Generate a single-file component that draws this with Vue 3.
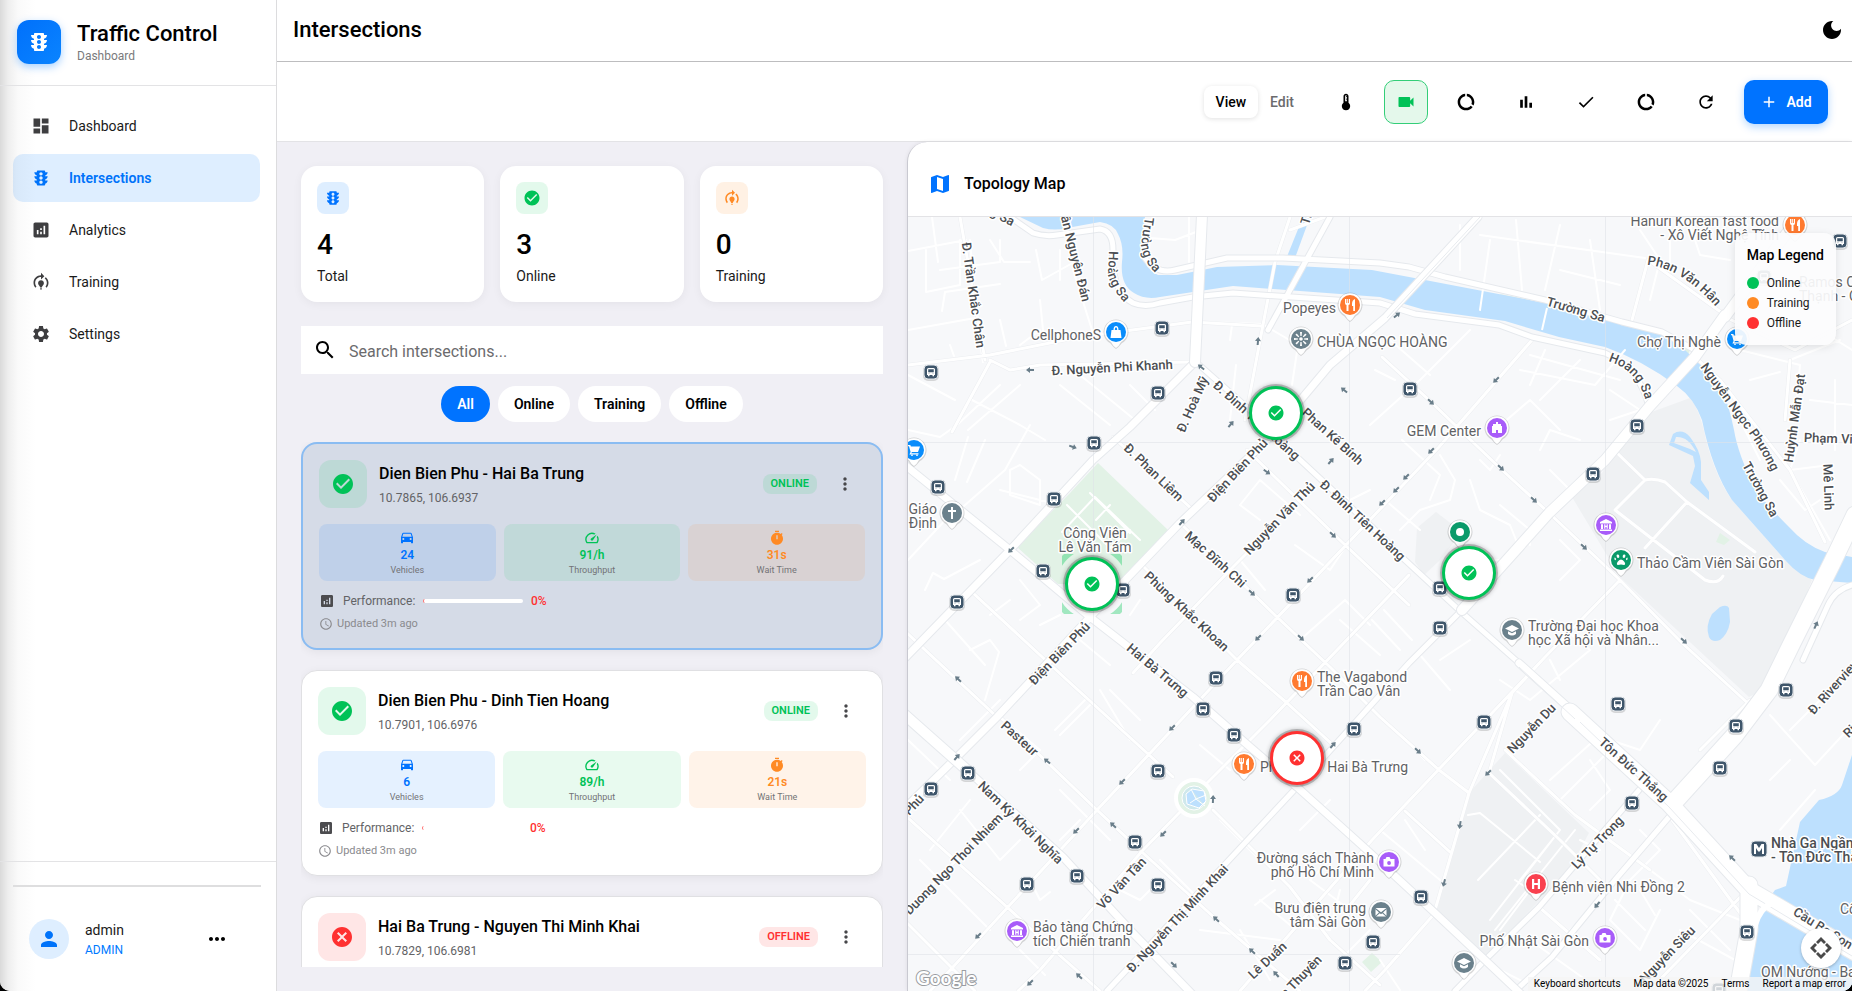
<script setup>
import { h, ref } from 'vue'

const paths = {
  dashboard: 'M3 13h8V3H3v10zm0 8h8v-6H3v6zm10 0h8V11h-8v10zm0-18v6h8V3h-8z',
  traffic: 'M20 10h-3V8.86c1.72-.45 3-2 3-3.86h-3V4c0-.55-.45-1-1-1H8c-.55 0-1 .45-1 1v1H4c0 1.86 1.28 3.41 3 3.86V10H4c0 1.86 1.28 3.41 3 3.86V15H4c0 1.86 1.28 3.41 3 3.86V20c0 .55.45 1 1 1h8c.55 0 1-.45 1-1v-1.14c1.72-.45 3-2 3-3.86h-3v-1.14c1.72-.45 3-2 3-3.86zm-8 9c-1.11 0-2-.9-2-2s.89-2 2-2c1.1 0 2 .9 2 2s-.89 2-2 2zm0-5c-1.11 0-2-.9-2-2s.89-2 2-2c1.1 0 2 .9 2 2s-.89 2-2 2zm0-5c-1.11 0-2-.9-2-2 0-1.11.89-2 2-2 1.1 0 2 .89 2 2 0 1.1-.89 2-2 2z',
  analytics: 'M19 3H5c-1.1 0-2 .9-2 2v14c0 1.1.9 2 2 2h14c1.1 0 2-.9 2-2V5c0-1.1-.9-2-2-2zM9 17H7v-5h2v5zm4 0h-2v-3h2v3zm0-5h-2v-2h2v2zm4 5h-2V7h2v10z',
  training: 'M15.5 13.5c0 2-2.5 3.5-2.5 5h-2c0-1.5-2.5-3-2.5-5 0-1.93 1.57-3.5 3.5-3.5s3.5 1.57 3.5 3.5zm-2.5 6h-2V21h2v-1.5zm6-6.5c0 1.68-.59 3.21-1.58 4.42l1.42 1.42C20.18 17.27 21 15.23 21 13c0-2.74-1.23-5.19-3.16-6.84l-1.42 1.42C17.99 8.86 19 10.82 19 13zm-3-8l-4-4v3c-4.97 0-9 4.03-9 9 0 2.23.82 4.27 2.16 5.84l1.42-1.42C5.59 16.21 5 14.68 5 13c0-3.86 3.14-7 7-7v3l4-4z',
  settings: 'M19.14 12.94c.04-.3.06-.61.06-.94 0-.32-.02-.64-.07-.94l2.03-1.58c.18-.14.23-.41.12-.61l-1.92-3.32c-.12-.22-.37-.29-.59-.22l-2.39.96c-.5-.38-1.03-.7-1.62-.94l-.36-2.54c-.04-.24-.24-.41-.48-.41h-3.84c-.24 0-.43.17-.47.41l-.36 2.54c-.59.24-1.13.57-1.62.94l-2.39-.96c-.22-.08-.47 0-.59.22L2.74 8.87c-.12.21-.08.47.12.61l2.03 1.58c-.05.3-.09.63-.09.94s.02.64.07.94l-2.03 1.58c-.18.14-.23.41-.12.61l1.92 3.32c.12.22.37.29.59.22l2.39-.96c.5.38 1.03.7 1.62.94l.36 2.54c.05.24.24.41.48.41h3.84c.24 0 .44-.17.47-.41l.36-2.54c.59-.24 1.13-.56 1.62-.94l2.39.96c.22.08.47 0 .59-.22l1.92-3.32c.12-.22.07-.47-.12-.61l-2.01-1.58zM12 15.6c-1.98 0-3.6-1.62-3.6-3.6s1.62-3.6 3.6-3.6 3.6 1.62 3.6 3.6-1.62 3.6-3.6 3.6z',
  person: 'M12 12c2.21 0 4-1.79 4-4s-1.79-4-4-4-4 1.79-4 4 1.79 4 4 4zm0 2c-2.67 0-8 1.34-8 4v2h16v-2c0-2.66-5.33-4-8-4z',
  moreH: 'M6 10c-1.1 0-2 .9-2 2s.9 2 2 2 2-.9 2-2-.9-2-2-2zm12 0c-1.1 0-2 .9-2 2s.9 2 2 2 2-.9 2-2-.9-2-2-2zm-6 0c-1.1 0-2 .9-2 2s.9 2 2 2 2-.9 2-2-.9-2-2-2z',
  moreV: 'M12 8c1.1 0 2-.9 2-2s-.9-2-2-2-2 .9-2 2 .9 2 2 2zm0 2c-1.1 0-2 .9-2 2s.9 2 2 2 2-.9 2-2-.9-2-2-2zm0 6c-1.1 0-2 .9-2 2s.9 2 2 2 2-.9 2-2-.9-2-2-2z',
  moon: 'M12 3c-4.97 0-9 4.03-9 9s4.03 9 9 9 9-4.03 9-9c0-.46-.04-.92-.1-1.36-.98 1.37-2.58 2.26-4.4 2.26-2.98 0-5.4-2.42-5.4-5.4 0-1.81.89-3.42 2.26-4.4C12.92 3.04 12.46 3 12 3z',
  thermostat: 'M15 13V5c0-1.66-1.34-3-3-3S9 3.34 9 5v8c-1.21.91-2 2.37-2 4 0 2.76 2.24 5 5 5s5-2.24 5-5c0-1.63-.79-3.09-2-4zm-4-8c0-.55.45-1 1-1s1 .45 1 1h-1v1h1v2h-1v1h1v2h-2V5z',
  video: 'M17 10.5V7c0-.55-.45-1-1-1H4c-.55 0-1 .45-1 1v10c0 .55.45 1 1 1h12c.55 0 1-.45 1-1v-3.5l4 4v-11l-4 4z',
  donut: 'M13 2.05v3.03c3.39.49 6 3.39 6 6.92 0 .9-.18 1.75-.48 2.54l2.6 1.53c.56-1.24.88-2.62.88-4.07 0-5.18-3.95-9.45-9-9.95zM12 19c-3.87 0-7-3.13-7-7 0-3.53 2.61-6.43 6-6.92V2.05c-5.06.5-9 4.76-9 9.95 0 5.52 4.47 10 9.99 10 3.31 0 6.24-1.61 8.06-4.09l-2.6-1.53C16.17 17.98 14.21 19 12 19z',
  bars: 'M5 9.2h3.2V19H5zM10.4 5h3.2v14h-3.2zm5.6 8h3.2v6H16z',
  check: 'M9 16.17L4.83 12l-1.42 1.41L9 19 21 7l-1.41-1.41z',
  refresh: 'M17.65 6.35C16.2 4.9 14.21 4 12 4c-4.42 0-7.99 3.58-7.99 8s3.57 8 7.99 8c3.73 0 6.84-2.55 7.73-6h-2.08c-.82 2.33-3.04 4-5.65 4-3.31 0-6-2.69-6-6s2.69-6 6-6c1.66 0 3.14.69 4.22 1.78L13 11h7V4l-2.35 2.35z',
  add: 'M19 13h-6v6h-2v-6H5v-2h6V5h2v6h6v2z',
  search: 'M15.5 14h-.79l-.28-.27C15.41 12.59 16 11.11 16 9.5 16 5.91 13.09 3 9.5 3S3 5.91 3 9.5 5.91 16 9.5 16c1.61 0 3.09-.59 4.23-1.57l.27.28v.79l5 4.99L20.49 19l-4.99-5zm-6 0C7.01 14 5 11.99 5 9.5S7.01 5 9.5 5 14 7.01 14 9.5 11.99 14 9.5 14z',
  ok: 'M12 2C6.48 2 2 6.48 2 12s4.48 10 10 10 10-4.48 10-10S17.52 2 12 2zm-2 15l-5-5 1.41-1.41L10 14.17l7.59-7.59L19 8l-9 9z',
  cancel: 'M12 2C6.47 2 2 6.47 2 12s4.47 10 10 10 10-4.47 10-10S17.53 2 12 2zm5 13.59L15.59 17 12 13.41 8.41 17 7 15.59 10.59 12 7 8.41 8.41 7 12 10.59 15.59 7 17 8.41 13.41 12 17 15.59z',
  car: 'M18.92 5.01C18.72 4.42 18.16 4 17.5 4h-11c-.66 0-1.21.42-1.42 1.01L3 11v8c0 .55.45 1 1 1h1c.55 0 1-.45 1-1v-1h12v1c0 .55.45 1 1 1h1c.55 0 1-.45 1-1v-8l-2.08-5.99zM6.5 15c-.83 0-1.5-.67-1.5-1.5S5.67 12 6.5 12s1.5.67 1.5 1.5S7.33 15 6.5 15zm11 0c-.83 0-1.5-.67-1.5-1.5s.67-1.5 1.5-1.5 1.5.67 1.5 1.5-.67 1.5-1.5 1.5zM5 10l1.5-4.5h11L19 10H5z',
  speed: 'M20.38 8.57l-1.23 1.85a8 8 0 0 1-.22 7.58H5.07A8 8 0 0 1 15.58 6.85l1.85-1.23A10 10 0 0 0 3.35 19a2 2 0 0 0 1.72 1h13.85a2 2 0 0 0 1.74-1 10 10 0 0 0-.27-10.44zm-9.79 6.84a2 2 0 0 0 2.83 0l5.66-8.49-8.49 5.66a2 2 0 0 0 0 2.83z',
  timer: 'M15 1H9v2h6V1zm4.03 6.39l1.42-1.42c-.43-.51-.9-.99-1.41-1.41l-1.42 1.42C16.07 4.74 14.12 4 12 4c-4.97 0-9 4.03-9 9s4.02 9 9 9 9-4.03 9-9c0-2.12-.74-4.07-1.97-5.61zM13 14h-2V8h2v6z',
  clock: 'M11.99 2C6.47 2 2 6.48 2 12s4.47 10 9.99 10C17.52 22 22 17.52 22 12S17.52 2 11.99 2zM12 20c-4.42 0-8-3.58-8-8s3.58-8 8-8 8 3.58 8 8-3.58 8-8 8zm.5-13H11v6l5.25 3.15.75-1.23-4.5-2.67z',
  map: 'M20.5 3l-.16.03L15 5.1 9 3 3.36 4.9c-.21.07-.36.25-.36.48V20.5c0 .28.22.5.5.5l.16-.03L9 18.9l6 2.1 5.64-1.9c.21-.07.36-.25.36-.48V3.5c0-.28-.22-.5-.5-.5zM15 19l-6-2.11V5l6 2.11V19z',
  compass: 'M12 1l5 5-2 2-3-3-3 3-2-2zM23 12l-5 5-2-2 3-3-3-3 2-2zM12 23l-5-5 2-2 3 3 3-3 2 2zM1 12l5-5 2 2-3 3 3 3-2 2z'
}

const Icon = (p) => h('svg', { viewBox: '0 0 24 24', width: p.size, height: p.size, fill: 'currentColor', 'aria-hidden': 'true' }, [h('path', { d: paths[p.name], 'fill-rule': 'evenodd' })])
Icon.props = ['name', 'size']

const nav = [
  { icon: 'dashboard', label: 'Dashboard' },
  { icon: 'traffic', label: 'Intersections', active: true },
  { icon: 'analytics', label: 'Analytics' },
  { icon: 'training', label: 'Training' },
  { icon: 'settings', label: 'Settings' }
]
const tools = [
  { icon: 'thermostat', label: 'Heat' },
  { icon: 'video', label: 'Cameras', on: true },
  { icon: 'donut', label: 'Usage' },
  { icon: 'bars', label: 'Statistics' },
  { icon: 'check', label: 'Validate' },
  { icon: 'donut', label: 'Data' },
  { icon: 'refresh', label: 'Refresh' }
]
const stats = [
  { icon: 'traffic', tone: 'blue', value: 4, label: 'Total' },
  { icon: 'ok', tone: 'green', value: 3, label: 'Online' },
  { icon: 'training', tone: 'orange', value: 0, label: 'Training' }
]
const query = ref('')
const filters = ['All', 'Online', 'Training', 'Offline']
const filter = ref('All')
const cards = [
  { name: 'Dien Bien Phu - Hai Ba Trung', at: '10.7865, 106.6937', status: 'ONLINE', selected: true, v: '24', t: '91/h', w: '31s' },
  { name: 'Dien Bien Phu - Dinh Tien Hoang', at: '10.7901, 106.6976', status: 'ONLINE', v: '6', t: '89/h', w: '21s' },
  { name: 'Hai Ba Trung - Nguyen Thi Minh Khai', at: '10.7829, 106.6981', status: 'OFFLINE', v: '11', t: '64/h', w: '38s' }
]
const metrics = (c) => [
  { icon: 'car', tone: 'blue', value: c.v, label: 'Vehicles' },
  { icon: 'speed', tone: 'green', value: c.t, label: 'Throughput' },
  { icon: 'timer', tone: 'orange', value: c.w, label: 'Wait Time' }
]
const legend = [['green', 'Online'], ['orange', 'Training'], ['red', 'Offline']]

// Map geometry, in map units: the visible area starts at 908,217.
const place = (x, y) => ({ left: `${((x - 908) / 944) * 100}%`, top: `${((y - 217) / 774) * 100}%` })
const markers = [
  { x: 1276, y: 413, name: 'Dien Bien Phu - Dinh Tien Hoang' },
  { x: 1092, y: 584, name: 'Dien Bien Phu - Hai Ba Trung', selected: true },
  { x: 1469, y: 573, name: 'Nguyen Binh Khiem' },
  { x: 1297, y: 758, name: 'Hai Ba Trung - Nguyen Thi Minh Khai', off: true }
]

const river = 'M1020 217L1043 228Q1055 231 1067 228L1100 222Q1114 224 1118 234Q1124 245 1122 262Q1120 285 1134 293Q1145 300 1160 297L1193 292L1233 286L1380 297L1425 310L1505 321L1559 337L1605 347Q1642 360 1677 386Q1694 398 1702 420Q1712 470 1732 500L1785 560Q1800 577 1815 580L1852 583V557L1825 552Q1805 545 1789 527Q1765 503 1756 490Q1738 455 1734 430Q1725 385 1709 373L1692 357Q1675 338 1650 331L1605 320L1545 303L1425 280L1372 270L1277 265L1217 267L1177 275H1158Q1145 269 1141 253L1145 217Z'
const water = [
  'M1303 217H1310L1295 258L1286 259Z',
  'M1852 755L1842 785Q1838 796 1819 800L1800 822L1786 886L1775 890Q1760 910 1752 930L1738 991H1852Z',
  'M1720 607Q1727 604 1729 608L1730 622Q1728 634 1720 640Q1712 643 1709 637Q1705 626 1712 614Z',
  'M1673 434Q1682 428 1690 437Q1700 450 1701 462V480L1709 492V500L1690 483L1695 466L1693 456L1682 451L1669 445ZM1676 437L1674 443L1690 449L1696 452Q1688 436 1676 437Z'
]
const grey = [
  'M1649 413L1690 398Q1700 410 1706 440Q1716 478 1732 500L1785 560L1812 580L1785 647L1769 687L1749 697L1620 577L1572 497L1602 473L1612 455Z',
  'M1505 753L1589 833L1569 870L1485 957L1435 910L1469 793Z',
  'M1436 512L1462 532L1440 560L1424 575L1415 562L1417 528Z'
]
const alleys = 'M932 217L938 262M908 251L966 240M970 240L975 305L983 362M908 330L975 318M926 250V292L960 285V240M940 270L1000 262V240M990 240L1004 262L1030 262M1036 250L1042 280L1078 260M1040 300L1044 340M1000 320L1006 346M1040 330L1020 345M942 311L945 292L1000 284M1060 250V280M1150 238L1175 240L1196 232M1189 217V262M1205 322L1262 324L1298 345M1158 328L1192 322M1073 270L1092 330M950 345L954 356M1232 325L1230 340M1236 365L1230 420M1020 385L968 430M955 400L908 375M908 430L940 437L957 425L1000 385M972 400L1020 425L1045 440M968 437L955 480M1060 385L1110 425M1080 375L1135 420M1155 410L1130 385M1298 345L1292 385M1010 470L1020 465L1040 480V505L1010 495ZM985 440L967 482M1030 425L1005 470L948 520M908 560L950 515M925 590L933 573L944 579L980 560M1000 490L1052 503M1062 532L1095 497L1140 540M1067 505L1110 548L1130 530M1090 493L1130 533M1110 505L1096 520M945 620L985 665M970 650L990 640L999 652L985 700M1010 600L990 615M1020 580L1040 605L1020 620M1040 625L1060 615M1080 640L1110 665M1110 690L1140 720M1130 615L1140 600M1260 520L1240 505L1260 480L1300 515M1240 560L1265 590M1310 470L1350 500L1370 490M1350 540L1330 570L1295 545M1340 620L1380 655M1300 640L1345 600L1370 625M1402 440L1440 475L1430 500M1440 455L1455 480L1450 500L1420 510L1400 530M1470 480L1480 510L1510 525L1520 550M1385 500L1420 530M1500 505L1530 530V545M1480 560L1505 560M1495 430L1530 400L1560 430M1540 450L1550 430L1580 440M1550 470L1570 490M1560 540L1580 560L1560 580M1480 460L1490 470L1500 455M1384 610L1412 640M1372 620L1400 650M1420 655L1450 690M1440 660L1470 640M1500 680L1530 700L1590 650L1560 625M1550 660L1560 680M1375 370L1395 380M1390 340L1430 375M1460 225V270M1490 240L1480 310M1516 220L1522 290M1560 225L1545 290M1590 240L1600 310M1560 270L1620 285M1480 235L1645 258M1520 370L1595 385L1625 350M1530 355L1620 380M1540 400L1580 360M1545 350L1530 385M1610 390L1640 410L1610 420M1470 330L1420 380L1370 425M1640 230L1660 260L1650 300M1670 220V270M1690 225L1700 255L1730 260M1790 360L1840 340M1820 330L1852 350M1740 350L1800 365L1795 420M1750 380L1780 372M1780 480L1805 510L1820 500M1790 470L1830 465M1835 380V450M1810 400L1852 405M1740 420L1760 460M1800 440L1790 470L1830 540M960 740L1000 700M1010 725L1040 750L1020 770M1055 730L1085 700M1060 735L1090 705M1100 690L1130 740M908 740L950 780M960 810L1000 860L1020 840M970 800L930 850M1060 790L1110 840M1080 820L1060 840M920 860L990 930M1035 890L1040 900L1050 892M1020 950L1045 975M1120 890L1140 900L1150 890M1160 860L1200 900M1200 745L1230 770M1220 820L1260 860M1260 900L1290 925L1330 930L1340 890M1200 930L1280 940M1240 930L1270 980M1255 905L1275 890M1300 830L1330 800M1330 860L1310 880L1350 910M1340 960L1370 930M1380 830L1440 880M1400 735L1425 760M1405 820L1425 850M1500 770L1560 830L1520 880M1468 815L1480 813L1540 862M1540 815L1478 880M1560 830L1490 920M1575 830L1495 930M1515 880L1530 890L1500 930M1550 780L1600 735M1560 800L1610 750M1590 760L1610 790L1590 810M1580 840L1600 850M1640 830L1660 850L1630 880M1650 870L1690 900L1740 920M1630 880L1610 920L1640 950L1660 910M1640 890L1655 915M1615 900L1645 930M1600 900L1570 930M1530 940L1600 990M1500 970L1540 990M1690 910L1730 950M1680 930L1735 960M1770 715L1815 765L1852 725M1790 730L1820 700M1790 760L1770 780M1815 790L1780 830M1400 990L1380 960M1660 720L1640 750L1610 740'
const minor = 'M1382 357L1429 400L1502 470L1549 513L1620 580L1682 643L1752 707M1532 340L1439 447L1237 660L1097 810L953 967L930 991M1270 530L1233 567L1160 643L1133 673M1409 575L1270 720L1203 787M1180 812L1143 850L1040 970L1018 991M1180 523L1277 617L1330 667L1380 717L1439 770L1469 793M1140 563L1237 660L1287 703L1333 745M1113 437L1193 510M1247 450L1343 543L1409 605M1000 717L1097 810L1143 853L1217 920L1300 991M973 593L1067 680L1147 753L1173 777M1213 810L1290 887L1330 940L1380 985M907 633L997 717M907 817L1007 907L1057 953L1100 991M907 923L975 991M1000 815L908 910M1620 580L1545 657L1512 693L1489 773M1512 693L1469 793L1435 910M1545 657L1372 840L1240 991M1325 217L1290 230M1290 217L1275 262L1262 330L1245 420M908 365L990 355L1080 337L1192 322L1262 326M990 360L1010 370L1040 365L1192 362M990 362L952 432M960 217L985 360M1614 450L1645 480Q1655 478 1665 482L1687 502L1755 552M1645 480L1615 510L1705 580Q1718 585 1723 576M1687 502L1645 548M1648 260L1632 320M1648 260L1725 315M1695 357L1720 380L1790 470L1825 542M1725 317L1795 350L1852 320M1790 360L1785 420M1670 817L1743 917M1752 885L1640 1000M1370 880L1350 905M1435 913L1385 970L1365 991M1405 811L1450 852M1700 750L1750 700M1489 773L1560 840L1600 880M1505 750L1575 815L1650 870M1539 907L1600 960'
const medium = 'M1010 217L1033 233Q1045 237 1057 235L1100 229Q1113 231 1113 250Q1110 290 1133 303Q1145 308 1160 303L1193 297L1233 293L1380 303L1415 314L1499 325L1532 337L1605 353Q1640 368 1649 407M1143 255Q1155 275 1175 270L1227 258L1283 258L1380 263L1409 267L1445 277L1545 300L1622 322L1662 332L1695 350M1330 217L1268 330M1297 787L1107 991M1462 610L1409 663L1297 787M1197 363L1250 410L1297 457L1372 527L1405 560L1459 610L1519 663M1639 790L1539 907L1485 960L1455 991M1669 817L1615 880L1552 957L1515 991M1852 585Q1835 590 1828 605L1803 660'
const major = 'M1478 217L1385 318L1330 365L1267 440L1180 523L1090 617L997 717L957 757L905 808M1195 362L1130 427L1093 460L1010 550L905 658M905 465L1010 550L1090 617L1193 697L1250 747L1297 787L1367 850L1435 913L1485 960L1522 995M1519 663L1579 717M967 770L1063 857L1133 933L1193 995'
const wide = 'M1202 215L1195 362M1725 315L1695 357L1649 407L1605 460L1549 513L1462 610M905 715L967 770M1800 215L1725 317'
const trunk = 'M1855 515L1832 563L1792 643L1769 690L1735 735L1676 800M1570 712L1669 803L1749 890L1855 952M1749 885V930L1738 991'
const roads = [
  ['alley', alleys], ['minor', minor], ['medium', medium], ['major', major], ['wide', wide], ['trunk', trunk]
]

const streets = [
  ['Đ. Trần Khắc Chân', 974, 295, 82], ['Đ. Nguyễn Phi Khanh', 1112, 367, -3], ['Đ. Hoà Mỹ', 1192, 404, -66],
  ['Đ. Đinh Tiên Hoàng', 1257, 420, 42], ['Phan Kế Bính', 1333, 436, 42], ['Điện Biên Phủ', 1237, 470, -47],
  ['Đ. Phan Liêm', 1154, 472, 44], ['Nguyễn Văn Thủ', 1279, 518, -46], ['Đ. Đinh Tiên Hoàng', 1363, 520, 43],
  ['Mạc Đĩnh Chi', 1216, 559, 42], ['Phùng Khắc Khoan', 1187, 611, 43], ['Điện Biên Phủ', 1059, 653, -46],
  ['Hai Bà Trưng', 1158, 670, 40], ['Pasteur', 1020, 738, 42], ['Nam Kỳ Khởi Nghĩa', 1021, 822, 44],
  ['Võ Văn Tần', 1121, 883, -47], ['Đ. Nguyễn Thị Minh Khai', 1177, 918, -47], ['Lê Duẩn', 1267, 960, -43],
  ['Nguyễn Du', 1531, 728, -46], ['Lý Tự Trọng', 1597, 842, -46], ['Tôn Đức Thắng', 1634, 769, 42],
  ['Nguyễn Siêu', 1667, 954, -46], ['Trường Sa', 1576, 309, 16], ['Trường Sa', 1761, 489, 61],
  ['Huỳnh Mẫn Đạt', 1794, 418, -82], ['Mê Linh', 1829, 487, 88]
]
const endStreets = [
  ['Trần Nguyên Đán', 1087, 301, 76], ['Hoàng Sa', 1014, 222, 28], ['Duong Ngo Thoi Nhiem', 1000, 815, -46],
  ['Điện Biên Phủ', 921, 796, -47], ['Hàn Thuyên', 1319, 957, -46]
]
const startStreets = [
  ['Cầu Ba Son', 1795, 910, 32], ['Đ. Riverview', 1810, 712, -48], ['Riverview', 1845, 735, -45], ['Phạm Viết Chánh', 1804, 437, 2],
  ['Trường Sa', 1304, 224, -72]
]
const curved = [
  ['c1', 'M1109 251L1108 275Q1112 291 1130 308', 'Hoàng Sa'],
  ['c2', 'M1145 217L1141 246Q1144 266 1162 278', 'Trường Sa'],
  ['c3', 'M1647 265Q1684 268 1722 314', 'Phan Văn Hân'],
  ['c4', 'M1608 361Q1638 370 1646 402', 'Hoàng Sa'],
  ['c5', 'M1700 367L1740 422Q1762 448 1778 486', 'Nguyễn Ngọc Phương']
]
// [label lines, x, first centre y, anchor]
const places = [
  [['CellphoneS'], 1101, 335, 'end'], [['Popeyes'], 1336, 308, 'end'], [['CHÙA NGỌC HOÀNG'], 1317, 342, 'start'],
  [['Hanuri Korean fast food', '- Xô Viết Nghệ Tĩnh'], 1779, 221, 'end'], [['Ramos C', 'Thạnh - Q'], 1799, 282, 'start'],
  [['Chợ Thị Nghè'], 1721, 342, 'end'], [['GEM Center'], 1481, 431, 'end'], [['Giáo', 'Định'], 937, 509, 'end'],
  [['Công Viên', 'Lê Văn Tám'], 1095, 533, 'middle'], [['The Vagabond', 'Trần Cao Vân'], 1317, 677, 'start'],
  [['Thảo Cầm Viên Sài Gòn'], 1637, 563, 'start'], [['Trường Đại học Khoa', 'học Xã hội và Nhân...'], 1528, 626, 'start'],
  [['Ph'], 1260, 767, 'start'], [['Hai Bà Trưng'], 1408, 767, 'end'], [['Đường sách Thành', 'phố Hồ Chí Minh'], 1374, 858, 'end'],
  [['Bưu điện trung', 'tâm Sài Gòn'], 1366, 908, 'end'], [['Bảo tàng Chứng', 'tích Chiến tranh'], 1033, 927, 'start'],
  [['Bệnh viện Nhi Đồng 2'], 1552, 887, 'start'], [['Phố Nhật Sài Gòn'], 1589, 941, 'end'],
  [['Cố'], 1840, 909, 'start'], [['OM Nướng - Ba Son'], 1761, 972, 'start']
]
const glyphs = {
  fork: 'M-5-6v4q0 2 1.5 2v6h2v-6q1.500 0 1.500-2v-4h-1v4h-.8v-4h-1v4h-.8v-4zM5-6q-3 1-3 5v2h1.200v5H5z',
  bag: 'M-4.500-2h9l1 8h-11zM-2.500-2q0-4 2.500-4t2.500 4h-1.300q0-2.700-1.200-2.700T-1.200-2z',
  cart: 'M-6-5h2.300l.6 1.500H6L4 2h-6l-.8 1.200H4.500v1.300H-4.600l1.200-2.400L-5-3.700h-1zM-3 5a1 1 0 1 0 2 0 1 1 0 1 0-2 0M2 5a1 1 0 1 0 2 0 1 1 0 1 0-2 0',
  cross: 'M-1-6h2v3h3v2h-3v7h-2v-7h-3v-2h3z',
  flower: 'M-1.800 0a1.800 1.800 0 1 0 3.600 0 1.800 1.800 0 1 0-3.600 0M-1-7h2l-.4 4h-1.200zM-1 7h2l-.4-4h-1.200zM-7-1v2l4-.4v-1.200zM7-1v2l-4-.4v-1.200zM-5.600-4.200l1.400-1.400 2.400 3-.8.8zM5.600-4.200l-1.400-1.400-2.400 3 .8.8zM-5.600 4.200l1.400 1.400 2.400-3-.8-.8zM5.600 4.200l-1.400 1.400-2.400-3 .8-.8z',
  museum: 'M0-6l6 3v1.500H-6V-3zM-5-.700h2v4.700h-2zM3-.700h2v4.700H3zM-1.800-.700h1.200v1.500h1.200v-1.500h1.200v4.500H.6v-1.700H-.6v1.700h-1.200zM-6 4.500H6V6H-6z',
  tower: 'M-1-6h2v2h3v2h1v7h-4V2h-2v3h-4v-7h1v-2h3z',
  camera: 'M-5.500-3h2l1-2h3l1 2H5.500v7.500h-11zM0-.900a1.900 1.900 0 1 0 .1 3.800 1.900 1.900 0 1 0-.1-3.800',
  mail: 'M-5.500-4h11L0 .3zM-5.500-2.800L-2 .4-5.500 3.700zM5.500-2.800L2 .4l3.500 3.300zM-1.200 1.200L0 2.200l1.200-1L5 4.500H-5z',
  cap: 'M0-5l7 3.500L0 2l-7-3.500zM-4 1.300L0 3.300l4-2V4Q0 7-4 4z',
  paw: 'M0-.500q2 0 3.500 2.500t-.5 3q-3-1-6 0-2-.500-.500-3T0-.500M-3.500-5.500q1.500-.500 1.800 1.500t-1.200 2-1.500-3M3.500-5.500q-1.500-.500-1.800 1.500t1.200 2 1.500-3M-6.500-2.500q1.500 0 1.500 1.500T-6 0t-.5-2.500M6.500-2.500Q5-2.500 5-1t1 1 .5-2.500',
  hospital: 'M-4-5h2.200v4h3.600v-4H4V5H1.800V1h-3.600v4H-4z',
  dot: 'M-4 0a4 4 0 1 0 8 0 4 4 0 1 0-8 0'
}
const pins = [
  [1116, 332, '#0a8dfb', 'bag'], [1350, 305, '#ff7a30', 'fork'], [1301, 339, '#6b818c', 'flower'], [1795, 225, '#ff7a30', 'fork'],
  [1737, 339, '#0a8dfb', 'cart'], [1497, 428, '#a85cf9', 'tower'], [914, 450, '#0a8dfb', 'cart'], [952, 513, '#6b818c', 'cross'],
  [1302, 681, '#ff7a30', 'fork'], [1460, 532, '#0a9a6a', 'dot'], [1621, 560, '#0a9a6a', 'paw'], [1606, 525, '#a85cf9', 'museum'],
  [1512, 630, '#6b818c', 'cap'], [1244, 764, '#ff7a30', 'fork'], [1389, 862, '#a85cf9', 'camera'], [1381, 912, '#6b818c', 'mail'],
  [1017, 931, '#a85cf9', 'museum'], [1536, 884, '#f9414f', 'hospital'], [1605, 938, '#a85cf9', 'camera'], [1464, 963, '#6b818c', 'cap']
]
const stops = [[931, 372], [1162, 328], [1158, 393], [1840, 241], [1410, 389], [1637, 426], [1764, 277], [1094, 443], [938, 487], [1054, 499], [1043, 571], [1123, 590], [957, 602], [1293, 595], [1216, 678], [1203, 709], [1593, 474], [1440, 588], [1440, 628], [1618, 704], [1786, 690], [1484, 722], [1234, 735], [1354, 729], [1158, 771], [968, 773], [931, 789], [1135, 842], [1077, 876], [1027, 884], [1158, 885], [1345, 963], [1373, 942], [1736, 726], [1720, 768], [1632, 803], [1421, 897], [1747, 932], [1719, 990]]
const arrows = [[1030, 370, 180], [1201, 367, 218], [1258, 341, -85], [1231, 424, -50], [1344, 390, 220], [1397, 315, -40], [1496, 380, 135], [1431, 402, 42], [1073, 447, 20], [1267, 472, 35], [1331, 461, -48], [1333, 535, 42], [1310, 580, 135], [1182, 522, -48], [1252, 593, 42], [1301, 638, 42], [1258, 638, 135], [1011, 550, 135], [958, 679, 222], [1431, 451, 135], [1406, 477, 135], [1396, 490, 135], [1382, 503, 135], [1501, 468, 42], [1534, 500, 42], [1584, 547, 42], [1684, 641, 42], [1816, 625, -65], [1172, 728, 135], [1047, 761, 220], [957, 757, -48], [1122, 782, 135], [1113, 825, 222], [1076, 831, 135], [1163, 834, 135], [1213, 799, -88], [1333, 745, -48], [978, 936, 135], [1079, 976, 222], [1030, 983, 135], [1174, 965, 45], [1216, 919, 222], [1252, 951, 222], [1276, 974, 228], [1418, 751, 42], [1488, 773, 135], [1460, 825, 100], [1444, 883, 105], [1597, 905, 130], [1732, 858, 222]]
</script>

<template>
  <div class="shell">
    <aside class="sidebar">
      <header class="brand">
        <span class="logo"><Icon name="traffic" size="24" /></span>
        <div>
          <strong class="brand-name">Traffic Control</strong>
          <span class="brand-sub">Dashboard</span>
        </div>
      </header>
      <nav class="nav">
        <a v-for="n in nav" :key="n.label" href="#" class="nav-item" :class="{ active: n.active }">
          <Icon :name="n.icon" size="20" /><span>{{ n.label }}</span>
        </a>
      </nav>
      <footer class="account">
        <hr class="rule" />
        <div class="user">
          <span class="avatar"><Icon name="person" size="24" /></span>
          <div class="who"><span class="user-name">admin</span><span class="role">ADMIN</span></div>
          <button class="plain" aria-label="Account menu"><Icon name="moreH" size="24" /></button>
        </div>
      </footer>
    </aside>

    <main class="main">
      <header class="topbar">
        <h1>Intersections</h1>
        <button class="plain" aria-label="Toggle dark mode"><Icon name="moon" size="24" /></button>
      </header>
      <div class="toolbar">
        <div class="modes">
          <button class="mode current">View</button>
          <button class="mode">Edit</button>
        </div>
        <button v-for="(t, i) in tools" :key="i" class="tool" :class="{ on: t.on }" :aria-label="t.label"><Icon :name="t.icon" size="20" /></button>
        <button class="add"><Icon name="add" size="18" /><span>Add</span></button>
      </div>

      <div class="content">
        <section class="panel">
          <div class="stats">
            <article v-for="s in stats" :key="s.label" class="stat">
              <span class="stat-icon" :class="s.tone"><Icon :name="s.icon" size="18" /></span>
              <strong class="stat-value">{{ s.value }}</strong>
              <span class="stat-label">{{ s.label }}</span>
            </article>
          </div>
          <label class="search">
            <Icon name="search" size="24" />
            <input v-model="query" type="text" placeholder="Search intersections..." aria-label="Search intersections" />
          </label>
          <div class="filters">
            <button v-for="f in filters" :key="f" class="chip" :class="{ chosen: f === filter }" @click="filter = f">{{ f }}</button>
          </div>
          <div class="list">
            <article v-for="c in cards" :key="c.name" class="card" :class="{ selected: c.selected }">
              <div class="card-head">
                <span class="card-icon" :class="c.status === 'ONLINE' ? 'green' : 'red'"><Icon :name="c.status === 'ONLINE' ? 'ok' : 'cancel'" size="24" /></span>
                <div class="card-title"><h2>{{ c.name }}</h2><p>{{ c.at }}</p></div>
                <span class="badge" :class="c.status === 'ONLINE' ? 'green' : 'red'">{{ c.status }}</span>
                <button class="menu" aria-label="More actions"><Icon name="moreV" size="20" /></button>
              </div>
              <div class="metrics">
                <div v-for="m in metrics(c)" :key="m.label" class="metric" :class="m.tone">
                  <Icon :name="m.icon" size="16" /><b>{{ m.value }}</b><small>{{ m.label }}</small>
                </div>
              </div>
              <div class="perf">
                <Icon name="analytics" size="16" /><span>Performance:</span><i class="track"></i><b>0%</b>
              </div>
              <div class="updated"><Icon name="clock" size="14" /><span>Updated 3m ago</span></div>
            </article>
          </div>
        </section>

        <section class="map-panel">
          <header class="map-head"><Icon name="map" size="24" /><h2>Topology Map</h2></header>
          <div class="map">
            <svg class="canvas" viewBox="908 217 944 774" preserveAspectRatio="xMinYMin slice" role="img" aria-label="City map">
              <path v-for="g in grey" :key="g" :d="g" fill="#eff1f3" />
              <path d="M1098 463L1168 530L1116 584H1058L1017 547L1070 493Z" fill="#e2f2e6" />
              <path d="M1720 533L1730 540L1724 545L1716 542ZM1500 294L1530 300L1528 303L1502 297ZM1605 319L1660 331L1690 350L1688 355Q1660 335 1605 322ZM1362 962L1372 953L1382 962L1371 972Z" fill="#e2f2e6" />
              <path :d="river" fill="#bde0fe" />
              <path v-for="w in water" :key="w" :d="w" fill="#bde0fe" fill-rule="evenodd" />
              <path d="M1547 308L1542 330" stroke="#fff" stroke-width="2" />
              <g v-for="[k, d] in roads" :key="k">
                <path :d="d" class="case" :class="k" /><path :d="d" class="road" :class="k" />
              </g>
              <path d="M1480 217L1387 318M1580 722L1669 807L1749 894L1852 956M1519 667L1575 719" fill="none" stroke="#e8ebef" stroke-width="1" />
              <path d="M1748 955L1755 925Q1760 908 1772 903" fill="none" stroke="#fff" stroke-width="6" />
              <circle cx="1194" cy="798" r="18" fill="#e2f2e6" stroke="#fff" stroke-width="4" />
              <circle cx="1194" cy="798" r="12" fill="#cfe8ec" stroke="#fff" stroke-width="1" />
              <path d="M1186 794L1192 789L1204 791L1206 801L1199 808L1187 804ZM1191 789L1196 799L1205 806M1190 803L1196 799L1206 795" fill="#bde0fe" stroke="#fff" stroke-width="1" />
              <path d="M1093.500 217V991M1349.500 217V991M1605.500 217V991M908 442.500H1852M908 954.500H1400" stroke="#dfe3e8" stroke-opacity=".6" />

              <g v-for="([x, y, a], i) in arrows" :key="'a' + i" :transform="`translate(${x} ${y}) rotate(${a})`">
                <path d="M-4-1H0V-3L4 0 0 3V1H-4Z" fill="#6a7e8a" />
              </g>
              <g v-for="([x, y], i) in stops" :key="'s' + i" :transform="`translate(${x} ${y})`">
                <rect x="-8" y="-7" width="16" height="16" rx="5" fill="#000" opacity=".14" />
                <rect x="-7" y="-7" width="14" height="14" rx="4" fill="#3f566b" stroke="#e4e8ec" />
                <path d="M-4-2.500Q-4-4-2.500-4h5Q4-4 4-2.500V3H3v1.200H1.500V3h-3v1.200H-3V3H-4Z" fill="#fff" />
                <path d="M-2.500-2.500h5V0h-5zM-2.500 1.200h1M1.500 1.200h1" fill="#3f566b" stroke="#3f566b" stroke-width=".5" />
              </g>
              <g class="street">
                <text v-for="([t, x, y, a], i) in streets" :key="i" :transform="`translate(${x} ${y}) rotate(${a})`" text-anchor="middle" dy="5">{{ t }}</text>
                <text v-for="([t, x, y, a], i) in endStreets" :key="'e' + i" :transform="`translate(${x} ${y}) rotate(${a})`" text-anchor="end" dy="5">{{ t }}</text>
                <text v-for="([t, x, y, a], i) in startStreets" :key="'b' + i" :transform="`translate(${x} ${y}) rotate(${a})`" dy="5">{{ t }}</text>
                <template v-for="[id, d, t] in curved" :key="id">
                  <path :id="id" :d="d" fill="none" stroke="none" />
                  <text><textPath :href="'#' + id">{{ t }}</textPath></text>
                </template>
              </g>
              <g v-for="([x, y, c, g], i) in pins" :key="'p' + i" :transform="`translate(${x} ${y})`">
                <path d="M0 17Q-3 15-6 11A12.500 12.500 0 1 1 6 11Q3 15 0 17Z" fill="#000" opacity=".15" />
                <path d="M0 16Q-3 14-5 10A11.500 11.500 0 1 1 5 10Q3 14 0 16Z" fill="#fff" />
                <circle r="10" :fill="c" />
                <path :d="glyphs[g]" fill="#fff" fill-rule="evenodd" />
              </g>
              <g class="poi">
                <text v-for="([lines, x, y, anchor], i) in places" :key="i" :text-anchor="anchor">
                  <tspan v-for="(l, j) in lines" :key="j" :x="x" :y="y + 5 + j * 14">{{ l }}</tspan>
                </text>
              </g>
              <g transform="translate(1759 849)">
                <rect x="-8" y="-8" width="16" height="16" rx="4" fill="#3f566b" stroke="#e4e8ec" />
                <path d="M-5 5V-5h2.500L0-1l2.500-4H5V5H3v-6L.8 2.500H-.8L-3-1v6z" fill="#fff" />
              </g>
              <g class="street"><text class="station"><tspan x="1771" y="848">Nhà Ga Ngầm</tspan><tspan x="1771" y="862">- Tôn Đức Thắng</tspan></text></g>
            </svg>

            <button v-for="m in markers" :key="m.name" class="marker" :class="{ off: m.off }" :style="place(m.x, m.y)" :aria-label="m.name">
              <svg v-if="m.selected" class="halo" viewBox="0 0 60 60" width="60" height="60"><circle cx="30" cy="30" r="38" fill="none" stroke="#00c853" stroke-width="6" opacity=".35" /></svg>
              <span class="marker-face"><Icon :name="m.off ? 'cancel' : 'ok'" size="18" /></span>
            </button>

            <div class="legend">
              <h3>Map Legend</h3>
              <p v-for="[tone, label] in legend" :key="label"><i :class="tone"></i>{{ label }}</p>
            </div>
            <button class="camera" aria-label="Map camera controls"><Icon name="compass" size="24" /></button>
            <span class="google">Google</span>
            <div class="credits">
              <button>Keyboard shortcuts</button><span>Map data ©2025</span><a href="#">Terms</a><a href="#">Report a map error</a>
            </div>
          </div>
        </section>
      </div>
    </main>
  </div>
</template>

<style>
body { margin: 0; background: #000; }
</style>

<style scoped>
.shell, .shell * { box-sizing: border-box; }
.shell { display: flex; height: 100vh; overflow: hidden; border-radius: 0 0 10px 10px; font-family: Roboto, "Liberation Sans", sans-serif; font-size: 14px; line-height: 20px; color: #000; background: #fff; }
h1, h2, h3, p { margin: 0; }
svg { display: block; flex: none; }
button { font: inherit; color: inherit; border: 0; background: none; padding: 0; cursor: pointer; display: flex; align-items: center; justify-content: center; }
a { color: inherit; text-decoration: none; }
input { font: inherit; }

.sidebar { width: 277px; flex: none; display: flex; flex-direction: column; border-right: 1px solid #dcdcde; background: linear-gradient(90deg, #dadada 0, #eee 8px, #fafafa 18px, #fff 36px); }
.brand { display: flex; align-items: center; gap: 16px; height: 86px; padding: 0 17px 2px; border-bottom: 1px solid #e3e3e5; }
.logo { display: grid; place-items: center; width: 44px; height: 44px; border-radius: 12px; color: #fff; background: linear-gradient(135deg, #0070fb, #0a84ff); box-shadow: 0 3px 8px rgba(0, 122, 255, .35); }
.brand-name { display: block; font-size: 22px; line-height: 28px; font-weight: 500; }
.brand-sub { display: block; font-size: 12px; line-height: 16px; color: #7a7a7c; }
.nav { flex: 1; display: flex; flex-direction: column; gap: 4px; padding: 16px 16px 0 13px; }
.nav-item { display: flex; align-items: center; gap: 18px; height: 48px; padding: 0 18px; border-radius: 10px; color: #1a1a1a; }
.nav-item svg { color: #3e3e40; }
.nav-item.active, .nav-item.active svg { color: #0073fa; }
.nav-item.active { font-weight: 600; background: rgba(0, 122, 255, .13); }
.account { border-top: 1px solid #e3e3e5; padding: 23px 15px 31px 13px; }
.rule { height: 2px; border: 0; margin: 0; background: #dededf; }
.user { display: flex; align-items: center; gap: 16px; padding: 31px 32px 0 16px; }
.avatar { display: grid; place-items: center; width: 40px; height: 40px; border-radius: 50%; background: #deeeff; color: #0073fa; }
.who { flex: 1; display: flex; flex-direction: column; padding-top: 2px; }
.user-name { color: #1a1a1a; }
.role { font-size: 12px; color: #007aff; }

.main { flex: 1; min-width: 0; display: flex; flex-direction: column; background: #fff; }
.topbar { display: flex; align-items: center; justify-content: space-between; height: 62px; padding: 0 8px 2px 16px; border-bottom: 1px solid #bdbdbf; }
.topbar h1 { font-size: 22px; line-height: 28px; font-weight: 500; }
.toolbar { display: flex; align-items: center; justify-content: flex-end; gap: 16px; height: 80px; padding: 0 24px; border-bottom: 1px solid #e3e3e6; }
.modes { display: flex; padding: 2px; }
.mode { height: 32px; padding: 0 12px; border-radius: 8px; font-weight: 500; color: #6b6b6d; }
.mode.current { color: #000; background: #fff; box-shadow: 0 1px 5px rgba(0, 0, 0, .12); }
.tool { width: 44px; height: 44px; border-radius: 10px; border: 1px solid transparent; }
.tool.on { color: #00c257; background: #e4f8eb; border-color: #33ce78; }
.add { gap: 8px; min-width: 84px; height: 44px; padding: 0 16px; border-radius: 10px; color: #fff; font-weight: 600; background: #0073ff; box-shadow: 0 3px 8px rgba(0, 122, 255, .3); }

.content { flex: 1; min-height: 0; display: grid; grid-template-columns: 2fr 3fr; background: #f0eff5; }
.panel { display: flex; flex-direction: column; min-width: 0; min-height: 0; padding: 24px; }
.stats { display: grid; grid-template-columns: repeat(3, 1fr); gap: 16px; }
.stat { display: flex; flex-direction: column; align-items: flex-start; height: 136px; padding: 16px; border-radius: 16px; background: #fff; box-shadow: 0 2px 10px rgba(0, 0, 0, .05); }
.stat-icon { display: grid; place-items: center; width: 32px; height: 32px; border-radius: 8px; }
.stat-value { margin-top: 13px; font-size: 28px; line-height: 36px; font-weight: 500; }
.stat-label { margin-top: 3px; color: #1a1a1a; }
.blue { color: #0073ff; background: rgba(0, 122, 255, .13); }
.green { color: #00c257; background: rgba(0, 200, 83, .11); }
.orange { color: #ff8a24; background: rgba(255, 138, 36, .12); }
.red { color: #ff3131; background: rgba(255, 49, 49, .12); }
.search { display: flex; align-items: center; gap: 12px; flex: none; height: 48px; margin-top: 24px; padding: 0 12px; background: #fff; }
.search input { flex: 1; border: 0; outline: 0; padding: 4px 0 0; background: none; font-size: 16px; }
.search input::placeholder { color: #6b6b6d; opacity: 1; }
.filters { display: flex; justify-content: center; gap: 8px; margin-top: 12px; }
.chip { height: 36px; padding: 0 16px; border-radius: 18px; background: #fff; font-weight: 600; }
.chip.chosen { color: #fff; background: #0073ff; }
.list { flex: 1; min-height: 0; overflow: hidden; margin-top: 20px; display: flex; flex-direction: column; gap: 20px; }
.card { flex: none; padding: 16px; border: 1px solid #e0e0e3; border-radius: 16px; background: #fff; box-shadow: 0 2px 10px rgba(0, 0, 0, .06); }
.card.selected { border: 2px solid #8abcf2; background: #d5dbe7; }
.card-head { display: flex; align-items: center; }
.card-icon { display: grid; place-items: center; width: 48px; height: 48px; border-radius: 12px; }
.card-title { flex: 1; min-width: 0; padding: 2px 0 0 12px; }
.card-title h2 { font-size: 16px; line-height: 24px; font-weight: 500; }
.card-title p { margin-top: 2px; font-size: 12px; line-height: 20px; color: #636366; }
.badge { padding: 0 8px; border-radius: 8px; font-size: 11px; font-weight: 600; }
.menu { width: 40px; height: 48px; margin-left: 8px; color: #47474a; }
.metrics { display: grid; grid-template-columns: repeat(3, 1fr); gap: 8px; margin-top: 16px; }
.metric { display: flex; flex-direction: column; align-items: center; height: 57px; padding-top: 6px; border-radius: 8px; }
.metric b { font-size: 12px; line-height: 18px; font-weight: 600; }
.metric small { font-size: 9px; line-height: 12px; color: #737376; }
.metric.blue { background: rgba(0, 122, 255, .1); }
.metric.green { background: rgba(0, 200, 83, .09); }
.metric.orange { background: rgba(255, 138, 36, .1); }
.perf { display: flex; align-items: center; gap: 8px; height: 16px; margin-top: 12px; font-size: 12px; color: #636366; }
.perf > svg { color: #4c4c4f; }
.perf span { width: 72px; white-space: nowrap; }
.perf b { color: #ff3131; font-weight: 500; }
.track { width: 100px; height: 4px; border-radius: 2px; border-left: 1px solid #ff6b6b; background: #fff; }
.updated { display: flex; align-items: center; gap: 4px; height: 16px; margin-top: 7px; font-size: 11px; color: #8a8a8e; }

.map-panel { display: flex; flex-direction: column; min-width: 0; border-left: 1px solid #c9c9d1; border-radius: 20px 0 0 0; background: #fff; box-shadow: 0 0 4px rgba(0, 0, 0, .08); }
.map-head { display: flex; align-items: center; gap: 12px; height: 75px; padding: 10px 20px 0; border-bottom: 1px solid #e3e3e6; color: #0073ff; }
.map-head h2 { font-size: 16px; font-weight: 500; color: #000; }
.map { position: relative; flex: 1; min-height: 0; overflow: hidden; background: #f7f8fa; }
.canvas { position: absolute; inset: 0; width: 100%; height: 100%; }
.case, .road { fill: none; stroke-linejoin: round; stroke-linecap: round; }
.road { stroke: #fff; }
.case { stroke: #e6e9ed; }
.case.alley { stroke: none; } .road.alley { stroke-width: 2; }
.case.minor { stroke-width: 4; stroke: #eceef1; } .road.minor { stroke-width: 3; }
.case.medium { stroke-width: 7; } .road.medium { stroke-width: 5; }
.case.major { stroke-width: 9; } .road.major { stroke-width: 7; }
.case.wide { stroke-width: 12; } .road.wide { stroke-width: 10; }
.case.trunk { stroke-width: 19; } .road.trunk { stroke-width: 17; }
.street text, .poi text { paint-order: stroke; stroke: #fff; stroke-width: 3px; stroke-linejoin: round; }
.street text { font-size: 13px; font-weight: 500; fill: #4b4e52; }
.street .station { font-size: 14px; }
.poi text { font-size: 14px; fill: #5f6265; }

.marker { position: absolute; width: 60px; height: 60px; margin: -30px 0 0 -30px; color: #00c257; }
.halo { position: absolute; inset: 0; overflow: hidden; }
.marker-face { position: relative; display: grid; place-items: center; width: 54px; height: 54px; border: 3px solid currentColor; border-radius: 50%; background: #fff; box-shadow: 0 0 0 2px rgba(0, 0, 0, .2), 0 0 4px 2px rgba(0, 0, 0, .2); }
.marker.off { color: #ff3131; }
.legend { position: absolute; top: 16px; right: 16px; padding: 12px; border-radius: 12px; background: rgba(252, 252, 253, .92); box-shadow: 0 2px 8px rgba(0, 0, 0, .1); }
.legend h3 { margin-bottom: 8px; font-size: 14px; font-weight: 500; line-height: 20px; }
.legend p { display: flex; align-items: center; gap: 8px; height: 20px; font-size: 12px; color: #1a1a1a; }
.legend i { width: 12px; height: 12px; border-radius: 50%; background: currentColor; }
.camera { position: absolute; right: 11px; bottom: 23px; width: 40px; height: 40px; border-radius: 50%; background: #fff; color: #4a4a4a; box-shadow: 0 1px 3px rgba(0, 0, 0, .25); }
.google { position: absolute; left: 8px; bottom: 1px; font-family: Lato, sans-serif; font-size: 19px; line-height: 24px; font-weight: 700; color: #fff; paint-order: stroke; -webkit-text-stroke: 2px #9a9da1; }
.credits { position: absolute; right: 0; bottom: 0; display: flex; gap: 13px; padding: 0 6px; font-size: 10px; line-height: 14px; background: rgba(245, 245, 245, .8); }
</style>
